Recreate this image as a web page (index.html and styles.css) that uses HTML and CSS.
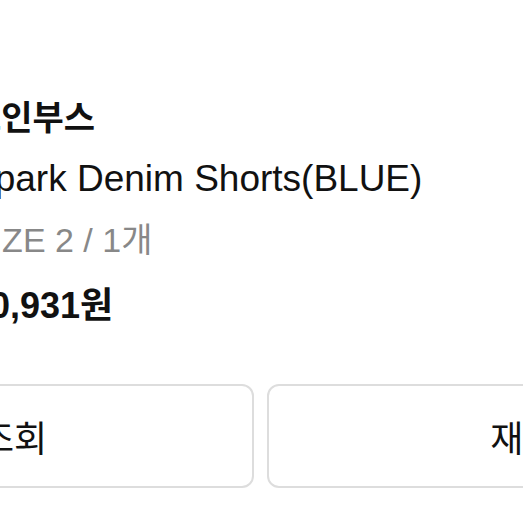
FILE: index.html
```html
<!DOCTYPE html>
<html lang="ko">
<head>
    <meta charset="UTF-8">
    <meta name="viewport" content="width=device-width, initial-scale=1.0">
    <title>주문 상세</title>
    <link rel="stylesheet" href="styles.css">
</head>
<body>
    <div class="order">
        <div class="order-item">
            <div class="thumb"></div>
            <div class="item-info">
                <p class="brand">모인부스</p>
                <p class="item-name">Spark Denim Shorts(BLUE)</p>
                <p class="item-option">SIZE 2 / 1개</p>
                <p class="item-price">30,931원</p>
            </div>
        </div>
        <div class="order-actions">
            <button class="action-btn">배송조회</button>
            <button class="action-btn">재구매</button>
        </div>
    </div>
</body>
</html>
```

FILE: styles.css
```css
body {
    margin: 0;
    padding: 0;
    background-color: #fff;
    font-family: "Liberation Sans", "Noto Sans CJK KR", sans-serif;
    color: #111;
    overflow: hidden;
}
.order {
    width: 1105px;
    margin-left: -292px;
}
.order-item {
    display: flex;
    gap: 22px;
    padding-top: 88px;
}
.thumb {
    width: 240px;
    height: 240px;
    flex-shrink: 0;
}
.item-info p {
    margin: 0;
    white-space: nowrap;
}
.brand {
    font-size: 34px;
    font-weight: bold;
    line-height: 60px;
}
.item-name {
    font-size: 37px;
    line-height: 62px;
}
.item-option {
    font-size: 34px;
    line-height: 60px;
    color: #888;
}
.item-price {
    font-size: 36px;
    font-weight: bold;
    line-height: 72px;
}
.order-actions {
    display: flex;
    gap: 13px;
    margin-top: 42px;
}
.action-btn {
    width: 546px;
    height: 104px;
    background: #fff;
    border: 2px solid #ddd;
    border-radius: 12px;
    font-family: inherit;
    font-size: 36px;
    color: #111;
}
```
